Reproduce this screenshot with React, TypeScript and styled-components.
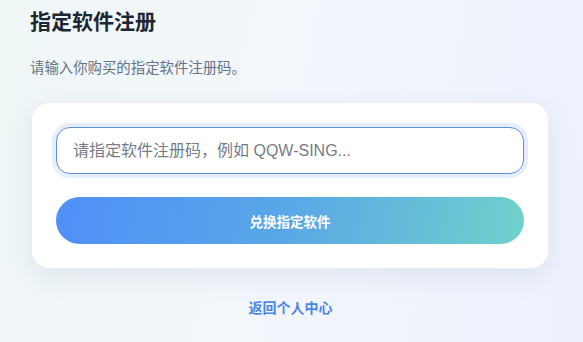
import React from "react";
import styled, { createGlobalStyle } from "styled-components";

const Global = createGlobalStyle`
  html, body { margin: 0; padding: 0; }
  body {
    font-family: "Liberation Sans", "Noto Sans CJK SC", sans-serif;
    background: linear-gradient(100deg, #eff6f6 0%, #f3f6fb 45%, #edf1fd 100%);
    min-height: 342px;
  }
`;

const Page = styled.main`
  box-sizing: border-box;
  width: 583px;
  height: 342px;
  padding: 8px 34px 0 30px;
  display: flex;
  flex-direction: column;
`;

const Title = styled.h1`
  margin: 0;
  font-size: 21px;
  line-height: 27px;
  font-weight: 700;
  color: #1d2733;
`;

const Subtitle = styled.p`
  margin: 23px 0 0;
  font-size: 14.4px;
  line-height: 20px;
  color: #677283;
`;

const Card = styled.section`
  margin: 24px 0 0 1px;
  box-sizing: border-box;
  height: 167px;
  padding: 24px 24px;
  background: #fff;
  border: 1px solid #e9edf3;
  border-radius: 18px;
  box-shadow: 0 8px 24px rgba(120, 140, 180, 0.14);
  display: flex;
  flex-direction: column;
  gap: 23px;
`;

const Input = styled.input`
  box-sizing: border-box;
  height: 47px;
  width: 100%;
  padding: 0 16px;
  border: 1px solid #5f8fdc;
  border-radius: 14px;
  outline: none;
  box-shadow: 0 0 0 4px #e6eefc;
  font-family: "Liberation Sans", "Noto Sans CJK SC", sans-serif;
  font-size: 16px;
  color: #333;
  background: #fff;
  caret-color: #222;
  &::placeholder { color: #777c84; }
`;

const Button = styled.button`
  height: 47px;
  width: 100%;
  border: none;
  border-radius: 24px;
  background: linear-gradient(100deg, #4f8ff8 0%, #5aa8e6 50%, #6fd1cc 100%);
  color: #fff;
  font-family: "Liberation Sans", "Noto Sans CJK SC", sans-serif;
  font-size: 13.5px;
  font-weight: 700;
  cursor: pointer;
`;

const BackLink = styled.a`
  margin-top: 29px;
  align-self: center;
  margin-left: 2px;
  font-size: 14px;
  line-height: 20px;
  font-weight: 700;
  color: #4b86e6;
  text-decoration: none;
`;

export default function App() {
  return (
    <>
      <Global />
      <Page>
        <Title>指定软件注册</Title>
        <Subtitle>请输入你购买的指定软件注册码。</Subtitle>
        <Card>
          <Input autoFocus placeholder="请指定软件注册码，例如 QQW-SING..." />
          <Button>兑换指定软件</Button>
        </Card>
        <BackLink href="#">返回个人中心</BackLink>
      </Page>
    </>
  );
}
